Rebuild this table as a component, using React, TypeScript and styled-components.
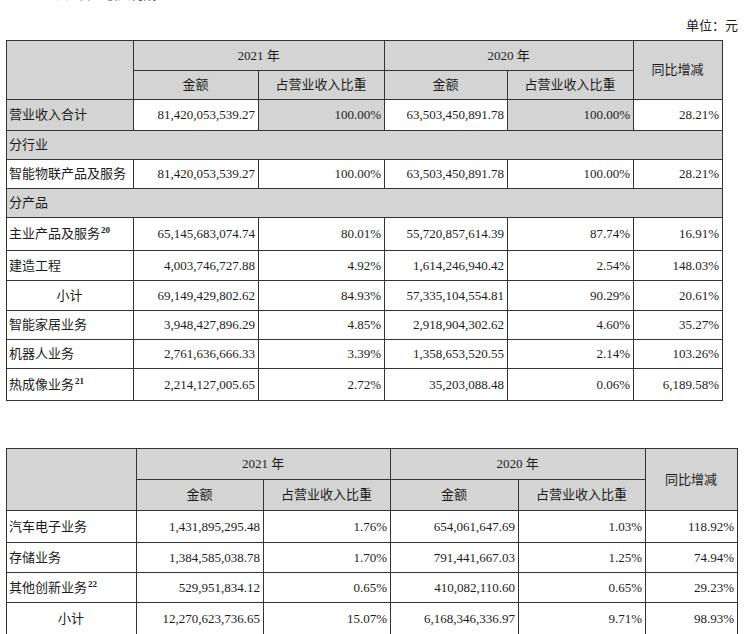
import React from "react";
import styled, { createGlobalStyle } from "styled-components";

const Global = createGlobalStyle`
  html, body { margin: 0; padding: 0; background: #ffffff; }
  body {
    font-family: "Liberation Serif", "Noto Sans CJK SC", serif;
    color: #1c1c1c;
    overflow: hidden;
  }
`;

const Page = styled.div`
  width: 744px;
  height: 634px;
  overflow: hidden;
  display: flex;
  flex-direction: column;
  padding: 0 0 0 6px;
  box-sizing: border-box;
`;

const Heading = styled.div`
  margin: -13px 0 0 40px;
  height: 16px;
  font-size: 13px;
  line-height: 16px;
  color: #555;
`;

const Unit = styled.div`
  align-self: flex-end;
  margin: 13px 6px 0 0;
  height: 20px;
  font-size: 13px;
  line-height: 20px;
`;

const Table = styled.table<{ $w: number; $mt: number }>`
  width: ${(p) => p.$w}px;
  margin-top: ${(p) => p.$mt}px;
  border-collapse: collapse;
  table-layout: fixed;
  font-size: 13px;
  flex-shrink: 0;
`;

const Row = styled.tr<{ $h: number }>`
  height: ${(p) => p.$h}px;
`;

const Cell = styled.td<{ $gray?: boolean; $align?: "left" | "right" | "center" }>`
  border: 1px solid #333333;
  background: ${(p) => (p.$gray ? "#d4d4d4" : "#ffffff")};
  text-align: ${(p) => p.$align || "right"};
  padding: 0 3px 0 2px;
  white-space: nowrap;
  overflow: hidden;
  line-height: 16px;
  vertical-align: middle;
`;

const Sup = styled.sup`
  font-size: 9px;
  font-weight: bold;
  line-height: 0;
  vertical-align: 5px;
  margin-left: 1px;
`;

type DataRow = {
  label: string;
  sup?: string;
  center?: boolean;
  a: string;
  b: string;
  c: string;
  d: string;
  e: string;
  h: number;
  shade?: boolean;
};

type Item = DataRow | { section: string; h: number };

const topRows: Item[] = [
  { label: "营业收入合计", a: "81,420,053,539.27", b: "100.00%", c: "63,503,450,891.78", d: "100.00%", e: "28.21%", h: 31, shade: true },
  { section: "分行业", h: 29 },
  { label: "智能物联产品及服务", a: "81,420,053,539.27", b: "100.00%", c: "63,503,450,891.78", d: "100.00%", e: "28.21%", h: 29 },
  { section: "分产品", h: 29 },
  { label: "主业产品及服务", sup: "20", a: "65,145,683,074.74", b: "80.01%", c: "55,720,857,614.39", d: "87.74%", e: "16.91%", h: 33 },
  { label: "建造工程", a: "4,003,746,727.88", b: "4.92%", c: "1,614,246,940.42", d: "2.54%", e: "148.03%", h: 30 },
  { label: "小计", center: true, a: "69,149,429,802.62", b: "84.93%", c: "57,335,104,554.81", d: "90.29%", e: "20.61%", h: 30 },
  { label: "智能家居业务", a: "3,948,427,896.29", b: "4.85%", c: "2,918,904,302.62", d: "4.60%", e: "35.27%", h: 29 },
  { label: "机器人业务", a: "2,761,636,666.33", b: "3.39%", c: "1,358,653,520.55", d: "2.14%", e: "103.26%", h: 29 },
  { label: "热成像业务", sup: "21", a: "2,214,127,005.65", b: "2.72%", c: "35,203,088.48", d: "0.06%", e: "6,189.58%", h: 32 },
];

const bottomRows: Item[] = [
  { label: "汽车电子业务", a: "1,431,895,295.48", b: "1.76%", c: "654,061,647.69", d: "1.03%", e: "118.92%", h: 32 },
  { label: "存储业务", a: "1,384,585,038.78", b: "1.70%", c: "791,441,667.03", d: "1.25%", e: "74.94%", h: 30 },
  { label: "其他创新业务", sup: "22", a: "529,951,834.12", b: "0.65%", c: "410,082,110.60", d: "0.65%", e: "29.23%", h: 30 },
  { label: "小计", center: true, a: "12,270,623,736.65", b: "15.07%", c: "6,168,346,336.97", d: "9.71%", e: "98.93%", h: 32 },
];

function RevenueTable({ widths, rows, mt, hh }: { widths: number[]; rows: Item[]; mt: number; hh: [number, number] }) {
  const total = widths.reduce((s, w) => s + w, 0);
  return (
    <Table $w={total} $mt={mt}>
      <colgroup>
        {widths.map((w, i) => (
          <col key={i} style={{ width: w }} />
        ))}
      </colgroup>
      <tbody>
        <Row $h={hh[0]}>
          <Cell $gray rowSpan={2} />
          <Cell $gray colSpan={2} $align="center">2021 年</Cell>
          <Cell $gray colSpan={2} $align="center">2020 年</Cell>
          <Cell $gray rowSpan={2} $align="center">同比增减</Cell>
        </Row>
        <Row $h={hh[1]}>
          <Cell $gray $align="center">金额</Cell>
          <Cell $gray $align="center">占营业收入比重</Cell>
          <Cell $gray $align="center">金额</Cell>
          <Cell $gray $align="center">占营业收入比重</Cell>
        </Row>
        {rows.map((r, i) =>
          "section" in r ? (
            <Row key={i} $h={r.h}>
              <Cell $gray colSpan={6} $align="left">{r.section}</Cell>
            </Row>
          ) : (
            <Row key={i} $h={r.h}>
              <Cell $gray={r.shade} $align={r.center ? "center" : "left"}>
                {r.label}
                {r.sup && <Sup>{r.sup}</Sup>}
              </Cell>
              <Cell>{r.a}</Cell>
              <Cell $gray={r.shade}>{r.b}</Cell>
              <Cell>{r.c}</Cell>
              <Cell $gray={r.shade}>{r.d}</Cell>
              <Cell>{r.e}</Cell>
            </Row>
          )
        )}
      </tbody>
    </Table>
  );
}

export default function App() {
  return (
    <>
      <Global />
      <Page>
        <Heading>（1）营业收入构成</Heading>
        <Unit>单位：元</Unit>
        <RevenueTable widths={[127, 125, 126, 123, 126, 89]} rows={topRows} mt={4} hh={[30, 29]} />
        <RevenueTable widths={[130, 127, 127, 128, 127, 92]} rows={bottomRows} mt={47} hh={[31, 31]} />
      </Page>
    </>
  );
}
